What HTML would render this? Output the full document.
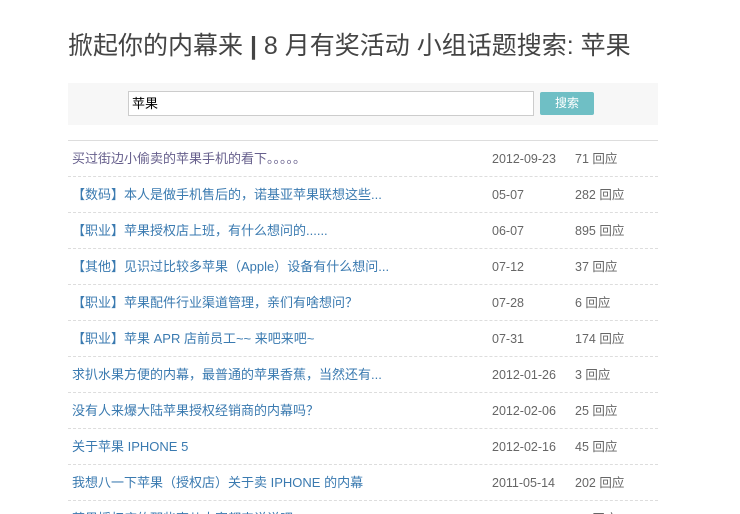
<!DOCTYPE html>
<html><head><meta charset="utf-8"><style>
html,body{margin:0;height:514px;overflow:hidden}
body{background:#fff;font-family:"Liberation Sans","Noto Sans CJK SC",sans-serif;width:740px;position:relative}
h1{position:absolute;left:68px;top:29px;margin:0;font-weight:normal;font-size:25px;color:#444;white-space:nowrap;line-height:34px}
h1 b{font-weight:bold}
.sb{position:absolute;left:68px;top:83px;width:590px;height:42px;background:#f7f7f7}
.inp{position:absolute;left:60px;top:8px;border:1px solid #ccc;background:#fff;font-size:13px;line-height:23px;padding-left:3px;box-sizing:border-box;width:406px;height:25px;color:#000}
.btn{position:absolute;left:472px;top:9px;width:54px;height:23px;background:#6fbfc5;border-radius:2px;color:#fff;font-size:12px;text-align:center;line-height:23px}
.hr{position:absolute;left:68px;top:140px;width:590px;border-top:1px solid #ddd}
.row{position:absolute;left:68px;width:590px;height:35px;border-bottom:1px dashed #ddd;font-size:13px;line-height:36px}
.row a{position:absolute;left:4px;color:#3a7ab0;text-decoration:none;white-space:nowrap}
.row .d{position:absolute;left:424px;color:#666;font-size:12.5px}
.row .r{position:absolute;left:507px;color:#666;font-size:12.5px}
</style></head><body>
<h1>掀起你的内幕来 <b>|</b> 8 月有奖活动 小组话题搜索: 苹果</h1>
<div class="sb"><div class="inp">苹果</div><div class="btn">搜索</div></div>
<div class="hr"></div>
<div class="row" style="top:141px"><a style="color:#665f8c">买过街边小偷卖的苹果手机的看下。。。。。</a><span class="d">2012-09-23</span><span class="r">71 回应</span></div>
<div class="row" style="top:177px"><a>【数码】本人是做手机售后的，诺基亚苹果联想这些...</a><span class="d">05-07</span><span class="r">282 回应</span></div>
<div class="row" style="top:213px"><a>【职业】苹果授权店上班，有什么想问的......</a><span class="d">06-07</span><span class="r">895 回应</span></div>
<div class="row" style="top:249px"><a>【其他】见识过比较多苹果（Apple）设备有什么想问...</a><span class="d">07-12</span><span class="r">37 回应</span></div>
<div class="row" style="top:285px"><a>【职业】苹果配件行业渠道管理，亲们有啥想问？</a><span class="d">07-28</span><span class="r">6 回应</span></div>
<div class="row" style="top:321px"><a>【职业】苹果 APR 店前员工~~ 来吧来吧~</a><span class="d">07-31</span><span class="r">174 回应</span></div>
<div class="row" style="top:357px"><a>求扒水果方便的内幕，最普通的苹果香蕉，当然还有...</a><span class="d">2012-01-26</span><span class="r">3 回应</span></div>
<div class="row" style="top:393px"><a>没有人来爆大陆苹果授权经销商的内幕吗？</a><span class="d">2012-02-06</span><span class="r">25 回应</span></div>
<div class="row" style="top:429px"><a>关于苹果 IPHONE 5</a><span class="d">2012-02-16</span><span class="r">45 回应</span></div>
<div class="row" style="top:465px"><a>我想八一下苹果（授权店）关于卖 IPHONE 的内幕</a><span class="d">2011-05-14</span><span class="r">202 回应</span></div>
<div class="row" style="top:501px"><a>苹果授权店的那些事儿大家都来说说吧</a><span class="d">2012-03-01</span><span class="r">12 回应</span></div>
</body></html>
